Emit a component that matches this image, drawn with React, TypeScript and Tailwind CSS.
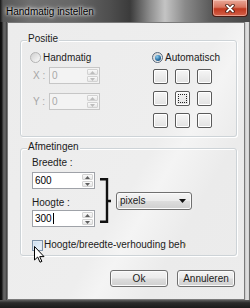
function Spin({ disabled }: { disabled?: boolean }) {
  const fill = disabled ? '#bdbdbd' : '#5f5f5f';
  return (
    <div className="flex w-[12px] flex-col gap-[1px] py-[1px] pr-[1px]">
      <div className="flex flex-1 items-center justify-center rounded-[1px] border border-[#d2d2d2] bg-gradient-to-b from-[#fafafa] to-[#e6e6e6]">
        <svg width="5" height="3" viewBox="0 0 5 3">
          <path d="M0 3 L2.5 0 L5 3Z" fill={fill} />
        </svg>
      </div>
      <div className="flex flex-1 items-center justify-center rounded-[1px] border border-[#d2d2d2] bg-gradient-to-b from-[#fafafa] to-[#e6e6e6]">
        <svg width="5" height="3" viewBox="0 0 5 3">
          <path d="M0 0 L2.5 3 L5 0Z" fill={fill} />
        </svg>
      </div>
    </div>
  );
}

function NumBox({ value, width, disabled, caret }: { value: string; width: string; disabled?: boolean; caret?: boolean }) {
  return (
    <div
      className={`flex h-[17px] ${width} border ${
        disabled ? 'border-[#c6c6c6] bg-[#f3f3f3] text-[#a9a9a9]' : 'border-[#9fa2a8] bg-white text-black'
      }`}
    >
      <span className="flex flex-1 items-center pl-[2px]">
        {value}
        {caret && <span className="ml-px inline-block h-[11px] w-px bg-black" />}
      </span>
      <Spin disabled={disabled} />
    </div>
  );
}

function Radio({ checked }: { checked?: boolean }) {
  return (
    <span
      className={`flex h-[11px] w-[11px] items-center justify-center rounded-full border ${
        checked ? 'border-[#58687a]' : 'border-[#b4b4b4]'
      } bg-gradient-to-br from-[#cfcfcf] to-[#fbfbfb]`}
    >
      {checked && (
        <span className="h-[6px] w-[6px] rounded-full bg-[radial-gradient(circle_at_35%_30%,#8fd0f2,#2a6fa3_55%,#12406a)]" />
      )}
    </span>
  );
}

function Button({ label }: { label: string }) {
  return (
    <div className="flex h-[17px] w-[58px] items-center justify-center rounded-[3px] border border-[#707070] bg-[linear-gradient(180deg,#f4f4f4_0%,#ebebeb_48%,#dddddd_52%,#cfcfcf_100%)] shadow-[inset_0_0_0_1px_#fbfbfb]">
      {label}
    </div>
  );
}

export default function App() {
  return (
    <div className="relative flex h-[308px] w-[250px] flex-col overflow-hidden bg-[#2c2c2c] font-['Liberation_Sans',Arial,sans-serif] text-[10px] leading-[12px] text-[#1b1b1b] select-none">
      {/* title bar */}
      <div className="relative flex h-[22px] shrink-0 items-center bg-[linear-gradient(90deg,#151515_0px,#565656_3px,#707070_12%,#666666_30%,#4e4e4e_44%,#3b3b3b_52%,#8e8e8e_60%,#c4c4c4_66%,#8a8a8a_74%,#5c5c5c_84%,#474747_100%)] pl-[6px] pt-[1px]">
        <span className="text-black [text-shadow:0_0_5px_#fff,0_0_3px_#fff]">Handmatig instellen</span>
        <div className="absolute right-[2px] top-0 flex h-[17px] w-[36px] items-center justify-center rounded-b-[4px] border border-t-0 border-[#4a1a12] bg-[linear-gradient(180deg,#e9a898_0%,#d8755f_45%,#c0381f_55%,#d5624a_100%)] shadow-[inset_0_0_0_1px_rgba(255,220,210,0.5)]">
          <svg width="10" height="9" viewBox="0 0 10 9">
            <path d="M2 1.5 L8 7.5 M8 1.5 L2 7.5" stroke="#3e1006" strokeWidth="3.4" strokeLinecap="round" />
            <path d="M2 1.5 L8 7.5 M8 1.5 L2 7.5" stroke="#fff" strokeWidth="1.8" strokeLinecap="round" />
          </svg>
        </div>
      </div>

      <div className="flex h-[278px] shrink-0">
        <div className="w-[7px] bg-[linear-gradient(90deg,#0b0b0b_0px,#161616_2px,#555555_3px,#686868_5px,#3c3c3c_7px)]" />

        {/* client area */}
        <div className="flex w-[238px] flex-col border border-[#7a7a7a] bg-[linear-gradient(120deg,#ececec_0%,#eeeeee_55%,#f4f4f4_62%,#ebebeb_75%,#ececec_100%)]">
          {/* Positie */}
          <div className="relative ml-[12px] mt-[17px] h-[97px] w-[217px] rounded-[3px] border border-[#cdd3d7] shadow-[inset_1px_1px_0_#fff,1px_1px_0_#fff]">
            <span className="absolute left-[6px] top-[-8px] bg-[#ededed] px-px">Positie</span>
            <div className="flex pl-[9px] pt-[11px]">
              <div className="flex w-[122px] flex-col">
                <div className="flex h-[11px] items-center gap-[2px]">
                  <Radio />
                  <span>Handmatig</span>
                </div>
                <div className="mt-[4px] flex items-center">
                  <span className="w-[19px] pl-[3px] text-[#a6a6a6]">X :</span>
                  <NumBox value="0" width="w-[51px]" disabled />
                </div>
                <div className="mt-[9px] flex items-center">
                  <span className="w-[19px] pl-[3px] text-[#a6a6a6]">Y :</span>
                  <NumBox value="0" width="w-[51px]" disabled />
                </div>
              </div>
              <div className="flex flex-col">
                <div className="flex h-[11px] items-center gap-[2px]">
                  <Radio checked />
                  <span>Automatisch</span>
                </div>
                <div className="ml-px mt-[6px] grid grid-cols-[repeat(3,15px)] gap-[7px]">
                  {Array.from({ length: 9 }).map((_, i) => (
                    <div
                      key={i}
                      className="flex h-[15px] w-[15px] items-center justify-center rounded-[2px] border border-[#5a5a5a] bg-gradient-to-b from-[#f6f6f6] to-[#e2e2e2] shadow-[inset_0_0_0_1px_#fff]"
                    >
                      {i === 4 && <div className="h-[9px] w-[9px] border border-dotted border-[#222]" />}
                    </div>
                  ))}
                </div>
              </div>
            </div>
          </div>

          {/* Afmetingen */}
          <div className="relative ml-[12px] mt-[11px] h-[108px] w-[217px] rounded-[3px] border border-[#cdd3d7] shadow-[inset_1px_1px_0_#fff,1px_1px_0_#fff]">
            <span className="absolute left-[6px] top-[-8px] bg-[#ededed] px-px">Afmetingen</span>
            <div className="flex flex-col pl-[11px] pt-[8px]">
              <div className="flex items-start">
                <div className="flex w-[63px] flex-col">
                  <span>Breedte :</span>
                  <div className="mt-[3px]">
                    <NumBox value="600" width="w-[63px]" />
                  </div>
                  <span className="mt-[8px]">Hoogte :</span>
                  <div className="mt-px">
                    <NumBox value="300" width="w-[63px]" caret />
                  </div>
                </div>
                <svg className="ml-[5px] mt-[21px]" width="12" height="45" viewBox="0 0 12 45">
                  <path d="M0 1.2 H7 V43.8 H0 M7 23 H11" stroke="#111" strokeWidth="2.4" fill="none" />
                </svg>
                <div className="ml-[4px] mt-[35px] flex h-[18px] w-[76px] items-center justify-between rounded-[3px] border border-[#707070] bg-[linear-gradient(180deg,#f4f4f4_0%,#ebebeb_48%,#dddddd_52%,#cfcfcf_100%)] pl-[3px] pr-[5px] shadow-[inset_0_0_0_1px_#fbfbfb]">
                  <span>pixels</span>
                  <svg width="7" height="4" viewBox="0 0 7 4">
                    <path d="M0 0 H7 L3.5 4Z" fill="#111" />
                  </svg>
                </div>
              </div>
              <div className="mt-[12px] flex items-center gap-px">
                <span className="h-[11px] w-[11px] border border-[#7f93a8] bg-gradient-to-br from-[#c9dcee] to-[#eef5fb] shadow-[inset_0_0_0_1px_#dfe9f3]" />
                <span className="w-[142px] overflow-hidden whitespace-nowrap">Hoogte/breedte-verhouding behouden</span>
              </div>
            </div>
          </div>

          {/* buttons */}
          <div className="mt-[14px] flex justify-end gap-[9px] pr-[9px]">
            <Button label="Ok" />
            <Button label="Annuleren" />
          </div>
        </div>

        <div className="flex-1 bg-[linear-gradient(90deg,#c4c4c4,#e2e2e2_40%,#d6d6d6_70%,#3a3a3a)]" />
      </div>

      <div className="flex-1 bg-[linear-gradient(180deg,#5e5e5e,#2b2b2b_35%,#1b1b1b)]" />

      {/* mouse pointer */}
      <svg className="absolute left-[34px] top-[246px]" width="12" height="18" viewBox="0 0 12 18">
        <path d="M0.5 0.5 V14 L3.7 11 L6 16.2 L7.9 15.4 L5.7 10.6 H10 Z" fill="#fff" stroke="#000" strokeWidth="1" strokeLinejoin="round" />
      </svg>
    </div>
  );
}
